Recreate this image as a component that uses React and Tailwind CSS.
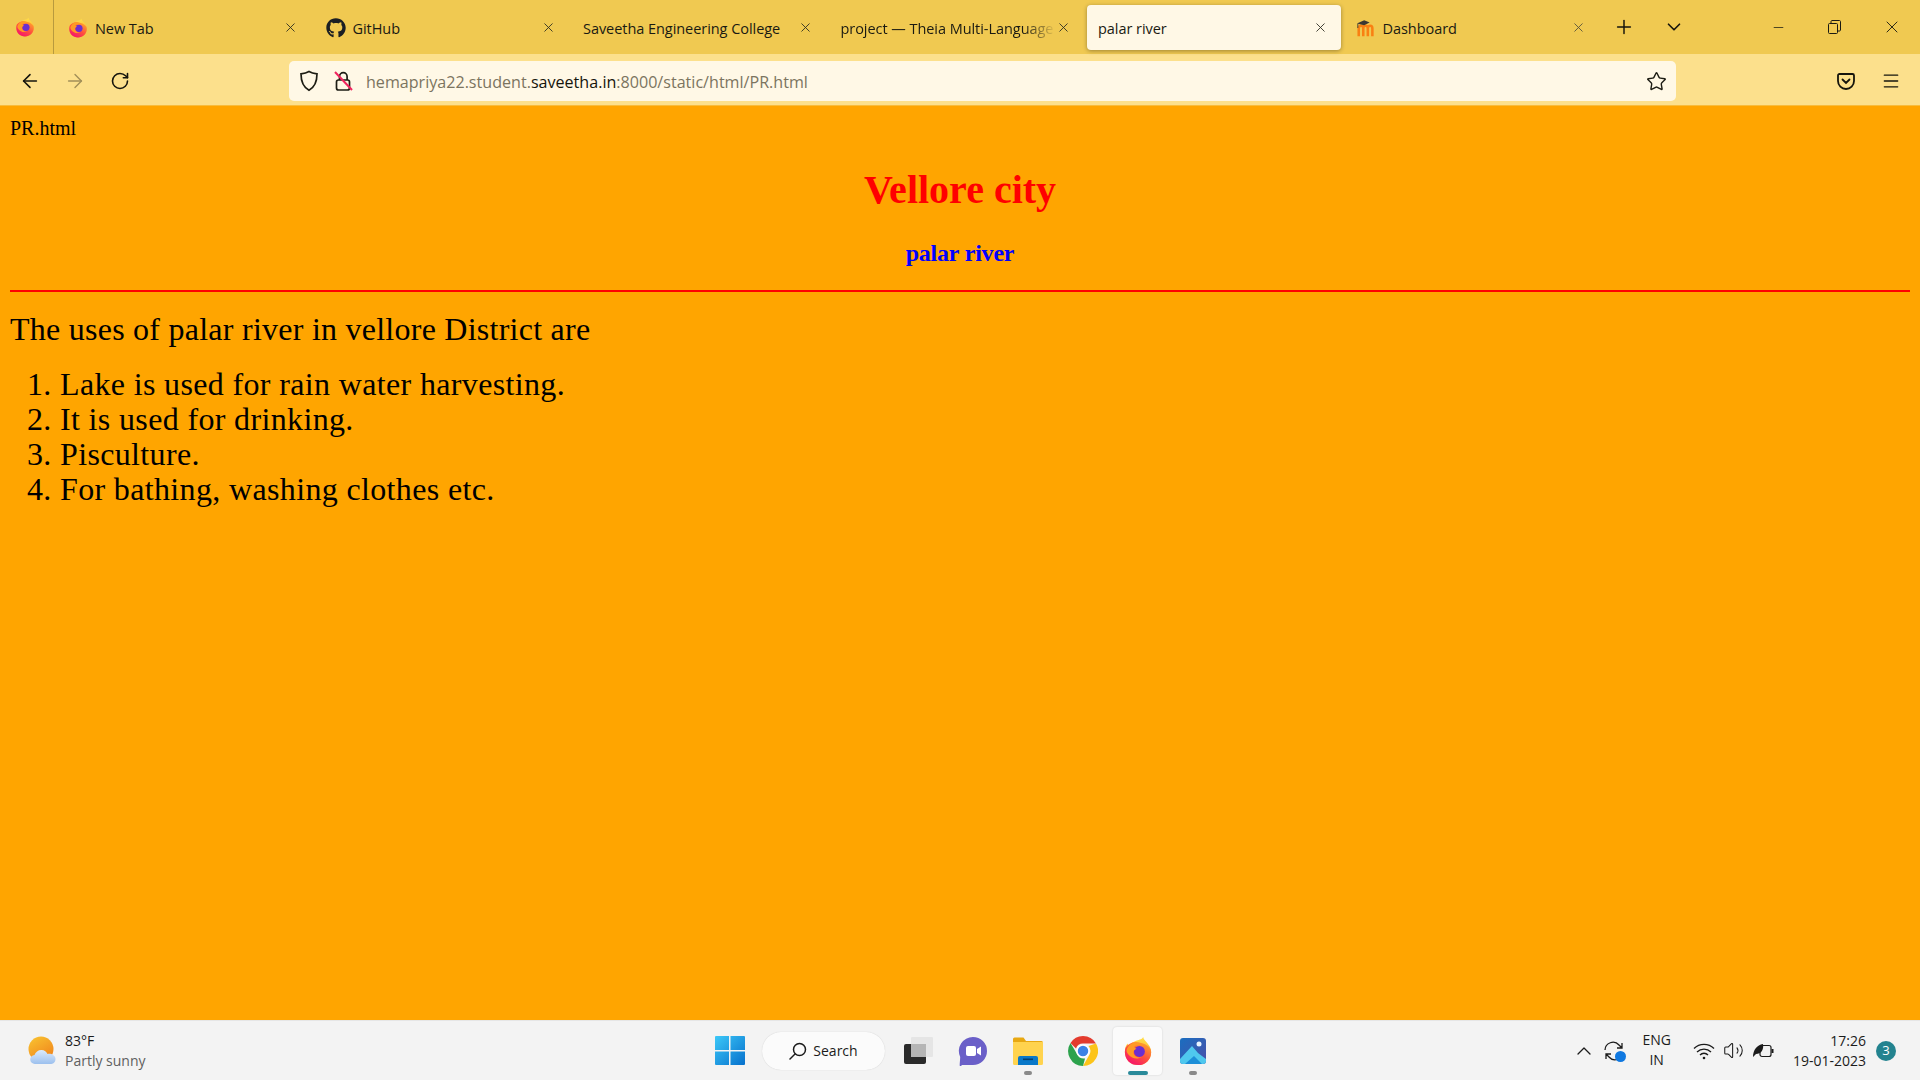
import React from "react";
import { ArrowLeft, ArrowRight, RotateCw, Plus, ChevronDown, ChevronUp, Minus, X, Star, Menu, Volume2 } from "lucide-react";
import { FaGithub } from "react-icons/fa";

const uiFont = "font-['Open_Sans','Noto_Sans',sans-serif]";

function Firefox({ size = 20, id = "ff" }) {
  return (
    <svg width={size} height={size} viewBox="0 0 32 32">
      <defs>
        <linearGradient id={`${id}-a`} x1="0.8" y1="0.1" x2="0.2" y2="0.9">
          <stop offset="0" stopColor="#ff9a2e" />
          <stop offset="0.5" stopColor="#ff4f3e" />
          <stop offset="1" stopColor="#f5156c" />
        </linearGradient>
        <linearGradient id={`${id}-b`} x1="0.5" y1="0" x2="0.5" y2="1">
          <stop offset="0" stopColor="#ffe04a" />
          <stop offset="1" stopColor="#ff9a1f" />
        </linearGradient>
      </defs>
      <path d="M21.500 1c.5 3 3 4.500 5.500 8 2.500 3 3 6 3 8.500 0 7.500-6 13.500-14 13.500S2 25 2 17c0-4 1-7 3-9 0 1 1 2 2 3 1-3 4-5 7-6 2-1 6-1 7.500-4z" fill={`url(#${id}-b)`} />
      <path d="M29.500 14c.4 1 .5 2.500.5 3.500C30 25 24 31 16 31S2 25 2 17c0-1.500.3-3 .8-4.500C6 8 10 6 16 7c6 .5 11 3 13.500 7z" fill={`url(#${id}-a)`} />
      <circle cx="17.500" cy="16.500" r="5.800" fill="#6b2fd0" />
      <path d="M4 14c2-5 7-8 12-7 3 .5 5 2 6 3.500-3-1-7-1-9.500.5-1 1 0 2 2 2.500-3 1-4 3.500-2.500 6.500 1.500 2.500 5 3.500 8 2.500-4.500 3-11 1.500-14-2.500C4 17.500 3.500 16 4 14z" fill="#ff9a24" />
    </svg>
  );
}

function Moodle() {
  return (
    <svg width="22" height="20" viewBox="0 0 22 20">
      <path d="M3 19V10.500c0-2 1-3 2.600-3S8 8.500 8 10.500V19M8 10.500c0-2 1-3 2.600-3S13 8.500 13 10.500V19M13 10.500c0-2 1-3 2.600-3s2.400 1 2.400 3V19" fill="none" stroke="#f98012" strokeWidth="2.800" />
      <path d="M1 5l8-3.500 6 2.500-6 3z" fill="#3c3833" />
      <path d="M2 5.500V10" stroke="#3c3833" strokeWidth="1" />
    </svg>
  );
}

function Tab({ icon, title, active, fade, muted }) {
  return (
    <div
      className={`flex h-[45px] w-[254px] mr-[3.500px] shrink-0 items-center rounded-[4px] pl-[11px] pr-[13px] ${
        active ? "bg-[#fff8e6] shadow-[0_1px_4px_rgba(0,0,0,0.35)]" : ""
      }`}
    >
      {icon && <span className="mr-[7px] flex w-[20px] shrink-0 justify-center">{icon}</span>}
      <span
        className={`min-w-0 flex-1 overflow-hidden whitespace-nowrap pt-[2px] text-[14.500px] tracking-[-0.050px] text-[#1a1a12] ${
          fade ? "[mask-image:linear-gradient(to_right,black_85%,transparent)]" : ""
        }`}
      >
        {title}
      </span>
      <X size={15} strokeWidth={1.400} className={`shrink-0 ${muted ? "text-[#55503a]" : "text-[#2b2b20]"}`} />
    </div>
  );
}

function TabBar() {
  return (
    <div className={`flex h-[54px] items-center bg-[#f0c951] ${uiFont}`}>
      <div className="flex h-full w-[54px] shrink-0 items-center justify-center border-r border-[#b89a3e] pb-[1px] pr-[4px]">
        <Firefox id="ffview" />
      </div>
      <div className="ml-[3px] flex items-center pt-[1px]">
        <Tab icon={<Firefox id="fftab" />} title="New Tab" />
        <Tab icon={<FaGithub size={20} className="text-[#1b1f23]" />} title="GitHub" />
        <Tab title="Saveetha Engineering College" />
        <Tab title="project — Theia Multi-Language IDE" fade />
        <Tab title="palar river" active />
        <Tab icon={<Moodle />} title="Dashboard" muted />
      </div>
      <div className="flex w-[44px] shrink-0 justify-center">
        <Plus size={22} strokeWidth={1.600} className="text-[#15140c]" />
      </div>
      <div className="flex w-[56px] shrink-0 justify-center">
        <ChevronDown size={22} strokeWidth={1.800} className="text-[#15140c]" />
      </div>
      <div className="ml-auto flex items-center text-[#1a1a12]">
        <span className="flex w-[57px] justify-center pl-[3px]"><Minus size={15} strokeWidth={1.200} /></span>
        <span className="flex w-[57px] justify-center pl-[2px]">
          <svg width="13" height="14" viewBox="0 0 13 14" fill="none" stroke="currentColor" strokeWidth="1">
            <rect x="0.500" y="3.500" width="9" height="10" rx="1" />
            <path d="M3 3V1.500C3 1 3.500 0.500 4 0.500h7.500c.5 0 1 .5 1 1V10c0 .5-.5 1-1 1H10" />
          </svg>
        </span>
        <span className="flex w-[58px] justify-center pl-[1px]"><X size={20} strokeWidth={1.100} /></span>
      </div>
    </div>
  );
}

function Toolbar() {
  return (
    <div className={`flex h-[52px] items-center border-b border-[#f8bc3c] bg-[#fce08c] pt-[3px] ${uiFont}`}>
      <div className="flex w-[289px] shrink-0 items-center pl-[7px] text-[#15140c]">
        <span className="flex w-[45px] justify-center"><ArrowLeft size={22} strokeWidth={1.700} /></span>
        <span className="flex w-[45px] justify-center"><ArrowRight size={22} strokeWidth={1.500} className="text-[#a28f58]" /></span>
        <span className="flex w-[45px] justify-center"><RotateCw size={20} strokeWidth={1.900} /></span>
      </div>
      <div className="flex h-[40px] w-[1387px] shrink-0 items-center rounded-[5px] bg-[#fff8e6] pl-[10px] pr-[9px]">
        <svg width="20" height="22" viewBox="0 0 20 22" fill="none" stroke="#1d1d14" strokeWidth="1.700">
          <path d="M10 1.500c2.500 1.500 5 2 8 2.300 0 7.500-1.500 13-8 16.500C3.500 16.800 2 11.300 2 3.800c3-.3 5.500-.8 8-2.300z" />
        </svg>
        <span className="ml-[14px] flex w-[22px] justify-center">
          <svg width="20" height="22" viewBox="0 0 20 22" fill="none">
            <rect x="2.500" y="10" width="13" height="10" rx="2" stroke="#1d1d14" strokeWidth="1.700" />
            <path d="M5.500 10V6.500a3.800 3.800 0 0 1 7.600 0V10" stroke="#1d1d14" strokeWidth="1.700" />
            <path d="M1 2l17 18" stroke="#f0245e" strokeWidth="2" />
          </svg>
        </span>
        <div className="ml-[11px] flex-1 pt-[2px] text-[16.100px] text-[#7b745f]">
          hemapriya22.student.<span className="text-[#15140c]">saveetha.in</span>:8000/static/html/PR.html
        </div>
        <Star size={21} strokeWidth={1.600} className="text-[#1d1d14]" />
      </div>
      <div className="ml-auto flex items-center pr-[7px] text-[#15140c]">
        <span className="flex w-[45px] justify-center">
          <svg width="18" height="19" viewBox="0 0 18 19" fill="none" stroke="currentColor" strokeWidth="1.800">
            <path d="M2.500 2h13c.8 0 1.500.7 1.500 1.500V9a8 8 0 0 1-16 0V3.500C1 2.700 1.700 2 2.500 2z" />
            <path d="M5.500 7.500L9 11l3.500-3.500" strokeLinecap="round" />
          </svg>
        </span>
        <span className="flex w-[45px] justify-center"><Menu size={20} strokeWidth={1.600} /></span>
      </div>
    </div>
  );
}

function Page() {
  const uses = [
    "Lake is used for rain water harvesting.",
    "It is used for drinking.",
    "Pisculture.",
    "For bathing, washing clothes etc.",
  ];
  return (
    <div className="h-[914px] bg-[#ffa500] px-[10px] pt-[8px] font-['Liberation_Serif',serif] text-black">
      <p className="text-[20px] leading-[28px]">PR.html</p>
      <h1 className="mt-[25px] text-center text-[40px] font-bold leading-[46px] text-[#ff0000]">Vellore city</h1>
      <h2 className="mt-[26px] text-center text-[24px] font-bold leading-[28px] tracking-[-0.200px] text-[#0000ff]">palar river</h2>
      <hr className="mt-[23px] border-0 border-t-2 border-[#ff0000]" />
      <p className="mt-[18px] text-[32px] leading-[38px] tracking-[0.250px]">The uses of palar river in vellore District are</p>
      <ol className="mt-[19px] list-decimal pl-[50px] text-[32px] leading-[35px] tracking-[0.350px]">
        {uses.map((u) => (
          <li key={u}>{u}</li>
        ))}
      </ol>
    </div>
  );
}

function TaskCell({ children, mark, active }) {
  return (
    <div
      className={`relative flex h-[48px] w-[49px] mx-[3px] items-center justify-center rounded-[4px] ${
        active ? "bg-[#fbfbfb] shadow-[0_0_2px_rgba(0,0,0,0.15)]" : ""
      }`}
    >
      {children}
      {mark && (
        <span className={`absolute bottom-[0px] left-1/2 h-[4px] -translate-x-1/2 rounded-full ${active ? "w-[20px] bg-[#2a8a9a]" : "w-[8px] bg-[#8a8a8a]"}`} />
      )}
    </div>
  );
}

function Taskbar() {
  return (
    <div className={`flex h-[60px] items-center border-t border-[#e6e6e6] bg-[#f3f3f3] ${uiFont}`}>
      <div className="flex w-[715px] shrink-0 items-center pl-[28px]">
        <svg width="30" height="30" viewBox="0 0 30 30">
          <defs>
            <linearGradient id="sun" x1="0.2" y1="0" x2="0.8" y2="1">
              <stop offset="0" stopColor="#f8c030" />
              <stop offset="1" stopColor="#f0801a" />
            </linearGradient>
            <linearGradient id="cloud" x1="0" y1="0" x2="0" y2="1">
              <stop offset="0" stopColor="#dcebfb" />
              <stop offset="1" stopColor="#9cc0ee" />
            </linearGradient>
          </defs>
          <circle cx="13" cy="13" r="12.500" fill="url(#sun)" />
          <path d="M7 28a4.500 4.500 0 0 1-.5-9c1-3 3.500-5 7-5 3 0 5 2 6 4 3-1 8 1 8 5s-3 5-5 5z" fill="url(#cloud)" />
        </svg>
        <div className="ml-[7px] text-[14px] leading-[20px]">
          <div className="text-[#1b1b1b]">83°F</div>
          <div className="text-[#5f5f5f]">Partly sunny</div>
        </div>
      </div>
      <svg width="30" height="30" viewBox="0 0 30 30" className="shrink-0">
        <defs>
          <linearGradient id="win" x1="0" y1="0" x2="1" y2="1">
            <stop offset="0" stopColor="#3cc8f8" />
            <stop offset="1" stopColor="#0670cc" />
          </linearGradient>
        </defs>
        <path d="M1 0h13v14H0V1a1 1 0 0 1 1-1zM15.500 0H29a1 1 0 0 1 1 1v13H15.500zM0 15.500h14V29H1a1 1 0 0 1-1-1zM15.500 15.500H30V28a1 1 0 0 1-1 1H15.500z" fill="url(#win)" />
      </svg>
      <div className="ml-[17px] flex h-[38px] w-[123px] shrink-0 items-center justify-center rounded-full bg-[#fbfbfb] shadow-[0_0_1px_rgba(0,0,0,0.2)]">
        <svg width="18" height="18" viewBox="0 0 18 18" fill="none" stroke="#1b1b1b" strokeWidth="1.500" className="mr-[6px]">
          <circle cx="10.500" cy="7.500" r="6" />
          <path d="M6 12l-5 5" strokeLinecap="round" />
        </svg>
        <span className="text-[14px] text-[#1b1b1b]">Search</span>
      </div>
      <div className="ml-[5px] flex shrink-0 items-center">
        <TaskCell>
          <svg width="30" height="30" viewBox="0 0 30 30">
            <rect x="1" y="8" width="22" height="20" rx="2" fill="#2a2a2a" />
            <rect x="8" y="1" width="22" height="20" rx="1" fill="#e2e2e2" opacity="0.850" />
            <rect x="8" y="8" width="15" height="13" fill="#b5b5b5" />
          </svg>
        </TaskCell>
        <TaskCell>
          <svg width="30" height="30" viewBox="0 0 30 30">
            <path d="M15 1a14 14 0 0 1 0 28H4l-1.500 1.500C1 30.500 2 27 2.200 21A14 14 0 0 1 15 1z" fill="#6a5fc8" />
            <rect x="8" y="10" width="10" height="10" rx="2" fill="#fff" />
            <path d="M19 13l4-2.500v9L19 17z" fill="#fff" />
          </svg>
        </TaskCell>
        <TaskCell mark>
          <svg width="30" height="28" viewBox="0 0 30 28">
            <path d="M0 2a1.500 1.500 0 0 1 1.500-1.500h9L13 4h15.500A1.500 1.500 0 0 1 30 5.500V8H0z" fill="#e8a812" />
            <path d="M0 5h30v21.500a1.500 1.500 0 0 1-1.500 1.500h-27A1.500 1.500 0 0 1 0 26.500z" fill="#ffd34e" />
            <path d="M5 21a2 2 0 0 1 2-2h16a2 2 0 0 1 2 2v7H5z" fill="#0a78c8" />
            <rect x="10" y="21.500" width="10" height="1.600" fill="#043f70" />
          </svg>
        </TaskCell>
        <TaskCell>
          <svg width="30" height="30" viewBox="0 0 30 30">
            <path d="M15 0a15 15 0 0 1 13 7.500H15a7.500 7.500 0 0 0-7 5L2.500 7A15 15 0 0 1 15 0z" fill="#e33b2e" />
            <path d="M28 7.500A15 15 0 0 1 15 30l6.500-11.500A7.500 7.500 0 0 0 20.500 10z" fill="#fcc419" />
            <path d="M15 30A15 15 0 0 1 2.500 7L9 18a7.500 7.500 0 0 0 8 4.500z" fill="#2ca24c" />
            <circle cx="15" cy="15" r="6" fill="#3b82e6" stroke="#fff" strokeWidth="1.500" />
          </svg>
        </TaskCell>
        <TaskCell mark active>
          <Firefox size={30} id="ffbar" />
        </TaskCell>
        <TaskCell mark>
          <svg width="28" height="28" viewBox="0 0 28 28">
            <defs>
              <linearGradient id="ph" x1="0" y1="0" x2="1" y2="1">
                <stop offset="0" stopColor="#1a6ec0" />
                <stop offset="1" stopColor="#4a4fa8" />
              </linearGradient>
            </defs>
            <rect width="26" height="26" x="1" y="1" rx="3" fill="url(#ph)" />
            <circle cx="20" cy="7" r="2.500" fill="#e8f4ff" />
            <path d="M1 22l12-13 6 7 8 6v2a3 3 0 0 1-3 3H4a3 3 0 0 1-3-3z" fill="#4fc8ee" />
            <path d="M6 27l9-8 8 8z" fill="#1d8fd8" />
          </svg>
        </TaskCell>
      </div>
      <div className="ml-auto flex items-center pr-[24px] text-[#1b1b1b]">
        <ChevronUp size={24} strokeWidth={1.300} className="mr-[6px]" />
        <span className="relative mr-[16px] flex h-[24px] w-[24px] items-center justify-center">
          <svg width="22" height="22" viewBox="0 0 22 22" fill="none" stroke="#1b1b1b" strokeWidth="1.300">
            <path d="M2 10a8 8 0 0 1 14-5l3 3M19 3v5h-5M20 12a8 8 0 0 1-14 5l-3-3M3 19v-5h5" />
          </svg>
          <span className="absolute bottom-[1px] right-[0px] h-[11px] w-[11px] rounded-full bg-[#0f78e0]" />
        </span>
        <div className="mr-[22px] -mt-[1px] text-center text-[14px] leading-[20px]">
          <div>ENG</div>
          <div>IN</div>
        </div>
        <svg width="22" height="18" viewBox="0 0 22 18" fill="none" stroke="#1b1b1b" strokeWidth="1.300" className="mr-[8px]">
          <path d="M1 6.500a14 14 0 0 1 20 0M4 10a10 10 0 0 1 14 0M7 13a5.500 5.500 0 0 1 8 0" />
          <circle cx="11" cy="16" r="1.300" fill="#1b1b1b" stroke="none" />
        </svg>
        <Volume2 size={21} strokeWidth={1.200} className="mr-[8px]" />
        <svg width="22" height="16" viewBox="0 0 22 16" fill="none" className="mr-[19px]">
          <rect x="8" y="2.500" width="11" height="11" rx="2" stroke="#1b1b1b" strokeWidth="1.200" />
          <rect x="19.500" y="6" width="2" height="4" fill="#1b1b1b" />
          <path d="M1 14C1 7 5 2 11 1c1 6-2 10-7 10z" fill="#1b1b1b" />
        </svg>
        <div className="text-right text-[14px] leading-[20px] text-[#1b1b1b]">
          <div>17:26</div>
          <div>19-01-2023</div>
        </div>
        <span className="ml-[10px] flex h-[20px] w-[20px] items-center justify-center rounded-full bg-[#23838f] text-[13px] text-white">3</span>
      </div>
    </div>
  );
}

export default function App() {
  return (
    <div className="h-[1080px] w-[1920px] overflow-hidden">
      <TabBar />
      <Toolbar />
      <Page />
      <Taskbar />
    </div>
  );
}
